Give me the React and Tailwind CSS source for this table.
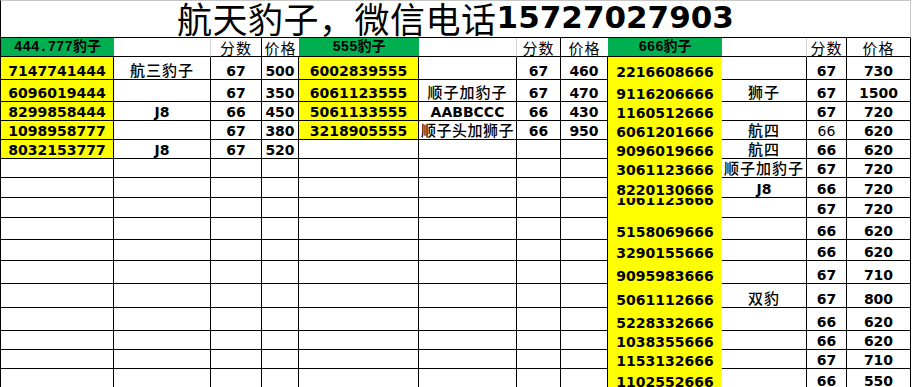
import clsx from "clsx";

const GRID =
  "grid grid-cols-[114px_97px_51px_37px_120px_98px_44px_47px_114px_85px_40px_64px]";

const ROW_H = [
  "h-[23px]", "h-[22px]", "h-[19px]", "h-[19px]", "h-[19px]", "h-[19px]", "h-[20px]", "h-[20px]",
  "h-[22px]", "h-[21px]", "h-[23px]", "h-[24px]", "h-[23px]", "h-[19px]", "h-[19px]", "h-[21px]",
];

// left: 号码 / 备注 / 分数 / 价格, middle: same, right: same
const rows = [
  ["7147741444", "航三豹子", "67", "500", "6002839555", "", "67", "460", "2216608666", "", "67", "730"],
  ["6096019444", "", "67", "350", "6061123555", "顺子加豹子", "67", "470", "9116206666", "狮子", "67", "1500"],
  ["8299858444", "J8", "66", "450", "5061133555", "AABBCCC", "66", "430", "1160512666", "", "67", "720"],
  ["1098958777", "", "67", "380", "3218905555", "顺子头加狮子", "66", "950", "6061201666", "航四", "66", "620"],
  ["8032153777", "J8", "67", "520", "", "", "", "", "9096019666", "航四", "66", "620"],
  ["", "", "", "", "", "", "", "", "3061123666", "顺子加豹子", "67", "720"],
  ["", "", "", "", "", "", "", "", "8220130666", "J8", "66", "720"],
  ["", "", "", "", "", "", "", "", "1061123666", "", "67", "720"],
  ["", "", "", "", "", "", "", "", "5158069666", "", "66", "620"],
  ["", "", "", "", "", "", "", "", "3290155666", "", "66", "620"],
  ["", "", "", "", "", "", "", "", "9095983666", "", "67", "710"],
  ["", "", "", "", "", "", "", "", "5061112666", "双豹", "67", "800"],
  ["", "", "", "", "", "", "", "", "5228332666", "", "66", "620"],
  ["", "", "", "", "", "", "", "", "1038355666", "", "66", "620"],
  ["", "", "", "", "", "", "", "", "1153132666", "", "67", "710"],
  ["", "", "", "", "", "", "", "", "1102552666", "", "66", "550"],
];

const isCjk = (s) => /[\u4e00-\u9fff]/.test(s);

function Txt({ value, light, clip }) {
  if (!value) return null;
  if (isCjk(value))
    return (
      <span
        className={clsx(
          "font-['Noto_Sans_CJK_SC',sans-serif] text-[15px] leading-[16px] font-medium pb-[1px] whitespace-nowrap",
          value.length > 5 ? "tracking-[0.5px]" : "tracking-[1px]"
        )}
      >
        {value}
      </span>
    );
  return (
    <span
      className={clsx(
        "font-['DejaVu_Sans',sans-serif] text-[14px] leading-[16px]",
        light ? "font-normal" : "font-bold",
        clip && "-mt-[6px]"
      )}
    >
      {value}
    </span>
  );
}

function Cell({ children, bg, bottom = true, right = "black", left, top }) {
  return (
    <div
      className={clsx(
        "flex justify-center overflow-hidden text-black",
        top ? "items-start" : "items-end",
        bg === "y" && "bg-[#ffff00]",
        bg === "g" && "bg-[#00b050]",
        bottom && "border-b border-b-black",
        right === "black" && "border-r border-r-black",
        right === "gray" && "border-r border-r-[#d4d4d4]",
        left && "border-l border-l-black"
      )}
    >
      {children}
    </div>
  );
}

function HeadText({ children, mono }) {
  return (
    <span
      className={clsx(
        "leading-[15px] pb-[1px]",
        mono
          ? "font-['Liberation_Mono','Noto_Sans_CJK_SC',monospace] text-[14px] font-bold"
          : "font-['Noto_Sans_CJK_SC',sans-serif] text-[15px] tracking-[1px]"
      )}
    >
      {children}
    </span>
  );
}

export default function App() {
  return (
    <div className="w-[912px] h-[387px] overflow-hidden bg-white">
      <div className="h-[38px] w-[911px] pb-[3px] border-t border-t-[#c6c6c6] border-b border-b-black border-l border-l-black border-r border-r-[#c6c6c6] flex items-center justify-center">
        <span className="font-['Noto_Sans_CJK_SC',serif] text-[35px] leading-none tracking-[0.5px] text-black">
          航天豹子，微信电话
        </span>
        <span className="font-['DejaVu_Sans',sans-serif] text-[31px] font-bold leading-none text-black">
          15727027903
        </span>
      </div>

      <div className={clsx(GRID, "h-[19px]")}>
        <Cell bg="g" right="none" left>
          <HeadText mono>444.777豹子</HeadText>
        </Cell>
        <Cell right="gray" />
        <Cell>
          <HeadText>分数</HeadText>
        </Cell>
        <Cell right="none">
          <HeadText>价格</HeadText>
        </Cell>
        <Cell bg="g" right="none">
          <HeadText mono>555豹子</HeadText>
        </Cell>
        <Cell right="gray" />
        <Cell>
          <HeadText>分数</HeadText>
        </Cell>
        <Cell right="none">
          <HeadText>价格</HeadText>
        </Cell>
        <Cell bg="g" right="none">
          <HeadText mono>666豹子</HeadText>
        </Cell>
        <Cell right="gray" />
        <Cell>
          <HeadText>分数</HeadText>
        </Cell>
        <Cell>
          <HeadText>价格</HeadText>
        </Cell>
      </div>

      {rows.map((r, i) => (
        <div key={i} className={clsx(GRID, ROW_H[i])}>
          <Cell left bg={r[0] ? "y" : undefined}>
            <Txt value={r[0]} />
          </Cell>
          <Cell>
            <Txt value={r[1]} />
          </Cell>
          <Cell>
            <Txt value={r[2]} />
          </Cell>
          <Cell>
            <Txt value={r[3]} />
          </Cell>
          <Cell bg={r[4] ? "y" : undefined}>
            <Txt value={r[4]} />
          </Cell>
          <Cell>
            <Txt value={r[5]} />
          </Cell>
          <Cell>
            <Txt value={r[6]} />
          </Cell>
          <Cell>
            <Txt value={r[7]} />
          </Cell>
          <Cell bg="y" bottom={false} right="none" top={i === 7}>
            <Txt value={r[8]} clip={i === 7} />
          </Cell>
          <Cell>
            <Txt value={r[9]} />
          </Cell>
          <Cell>
            <Txt value={r[10]} light={i === 3} />
          </Cell>
          <Cell>
            <Txt value={r[11]} />
          </Cell>
        </div>
      ))}
    </div>
  );
}
